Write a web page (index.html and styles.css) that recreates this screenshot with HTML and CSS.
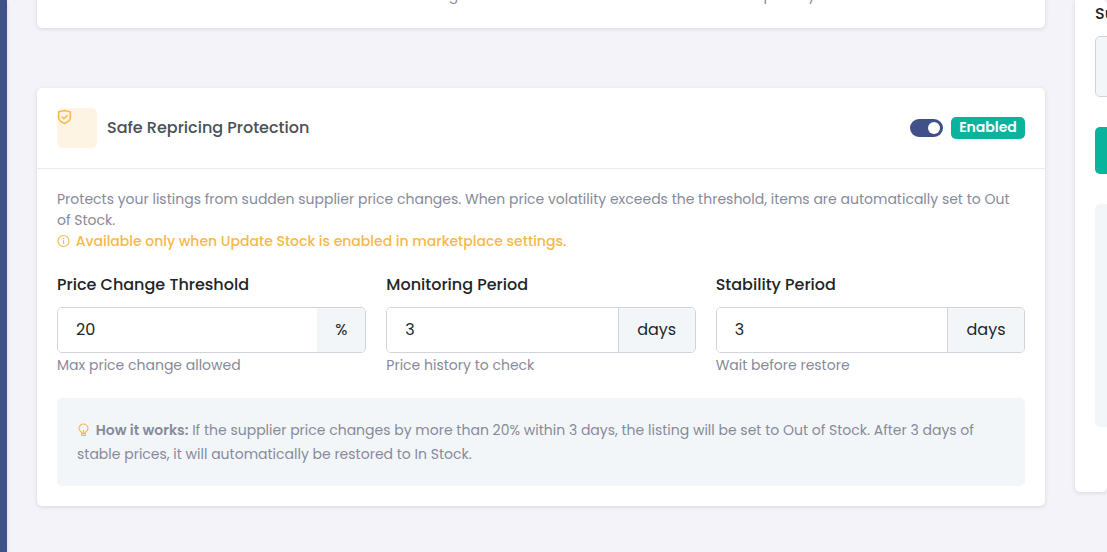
FILE: index.html
```html
<!DOCTYPE html>
<html lang="en">
<head>
<meta charset="utf-8">
<meta name="viewport" content="width=device-width, initial-scale=1">
<title>Safe Repricing Protection</title>
<link rel="stylesheet" href="styles.css">
</head>
<body>
<div class="app">
  <nav class="sidebar" aria-label="Main"></nav>
  <div class="content">
    <main class="column">
      <section class="card card-previous">
        <div class="fields">
          <div class="help">Lowest stock to list</div>
          <div class="help">Best margin allowed</div>
          <div class="help">Stock quantity</div>
        </div>
      </section>
      <section class="card">
        <header class="card-header">
          <span class="avatar">
            <svg class="shield" viewBox="0 0 15 16" fill="none" stroke="currentColor" stroke-width="1.500" aria-hidden="true">
              <path d="M7.500 1.500 1.700 2.800v6c0 1.400.7 2.500 1.800 3.300l4 2.500 4-2.500c1.100-.8 1.800-1.900 1.800-3.300v-6z"/>
              <path d="m4.700 7.500 2.200 2.200 3.700-3.700"/>
            </svg>
          </span>
          <h2 class="card-title">Safe Repricing Protection</h2>
          <input class="switch" type="checkbox" role="switch" id="protection" checked>
          <label class="badge" for="protection">Enabled</label>
        </header>
        <div class="card-body">
          <p class="description">Protects your listings from sudden supplier price changes. When price volatility exceeds the threshold, items are automatically set to Out of Stock.</p>
          <p class="notice">
            <svg class="icon" viewBox="0 0 14 14" fill="none" stroke="currentColor" stroke-width="1.200" aria-hidden="true">
              <circle cx="6.500" cy="7" r="5.500"/>
              <path d="M6.500 6.200v3.600M6.500 4v1.200"/>
            </svg>
            Available only when Update Stock is enabled in marketplace settings.
          </p>
          <div class="fields">
            <div class="field">
              <label class="label" for="threshold">Price Change Threshold</label>
              <div class="input-group">
                <input class="input" id="threshold" type="text" inputmode="numeric" value="20">
                <span class="unit unit-plain">%</span>
              </div>
              <div class="help">Max price change allowed</div>
            </div>
            <div class="field">
              <label class="label" for="monitoring">Monitoring Period</label>
              <div class="input-group">
                <input class="input" id="monitoring" type="text" inputmode="numeric" value="3">
                <span class="unit">days</span>
              </div>
              <div class="help">Price history to check</div>
            </div>
            <div class="field">
              <label class="label" for="stability">Stability Period</label>
              <div class="input-group">
                <input class="input" id="stability" type="text" inputmode="numeric" value="3">
                <span class="unit">days</span>
              </div>
              <div class="help">Wait before restore</div>
            </div>
          </div>
          <p class="info">
            <svg class="icon bulb" viewBox="0 0 14 14" fill="none" stroke="currentColor" stroke-width="1.200" aria-hidden="true">
              <path d="M4.700 12.400V9.800C4.500 8.600 2 7.800 2 5.500a4.500 4.500 0 0 1 9 0c0 2.300-2.500 3.100-2.700 4.300v2.600z"/>
              <path d="M4.700 10.300h3.600M6.500 9.800V7"/>
            </svg>
            <strong>How it works:</strong> If the supplier price changes by more than 20% within 3 days, the listing will be set to Out of Stock. After 3 days of stable prices, it will automatically be restored to In Stock.
          </p>
        </div>
      </section>
    </main>
    <aside class="panel">
      <label class="label" for="supplier">Su</label>
      <input class="panel-input" id="supplier" type="text" readonly>
      <button class="panel-button" type="button" aria-label="Save"></button>
      <div class="panel-box"></div>
    </aside>
  </div>
</div>
</body>
</html>
```
FILE: styles.css
```css
* { box-sizing: border-box; }

body {
  margin: 0;
  overflow: hidden;
  background: #f3f3f9;
  color: #212529;
  font: 14px/21px Poppins, Inter, sans-serif;
}

p, h2 { margin: 0; }

.app {
  display: grid;
  grid-template-columns: 7px minmax(0, 1fr);
  min-height: 100vh;
}

.sidebar { background: #405189; box-shadow: 0 2px 4px rgba(15, 34, 58, .12); }

.content {
  display: grid;
  grid-template-columns: minmax(0, 1fr) 32px;
  gap: 30px;
  align-items: start;
  padding-left: 30px;
  overflow: hidden;
}

.column { margin-top: -15px; }

.card, .panel {
  background: #fff;
  border-radius: 5px;
  box-shadow: 0 1px 4px rgba(56, 65, 74, .15);
}

.card-previous { padding: 0 20px 22px; margin-bottom: 60px; }

.card-header {
  display: flex;
  align-items: center;
  padding: 20px;
  border-bottom: 1px solid #e9ebec;
}

.avatar {
  width: 40px;
  height: 40px;
  margin-right: 10px;
  border-radius: 5px;
  background: #fef4e4;
  color: #f7b84b;
}

.shield { display: block; width: 15px; height: 16px; margin-top: 1px; }

.card-title {
  flex: 1;
  color: #495057;
  font-size: 16px;
  font-weight: 500;
  line-height: 20px;
}

.switch {
  appearance: none;
  display: flex;
  justify-content: flex-end;
  width: 33px;
  height: 18px;
  margin: 0 8px 0 0;
  padding: 3px;
  border-radius: 9px;
  background: #405189;
}

.switch::before {
  content: "";
  width: 12px;
  height: 12px;
  border-radius: 50%;
  background: #fff;
}

.switch:not(:checked) { justify-content: flex-start; background: #ced4da; }

.badge {
  width: 74px;
  padding-bottom: 1px;
  border-radius: 5px;
  background: #0ab39c;
  color: #fff;
  font-weight: 600;
  line-height: 21px;
  text-align: center;
}

.card-body { padding: 20px; }
.description, .help { color: #878a99; }
.notice { color: #f7b84b; font-weight: 500; }

.icon {
  width: 14px;
  height: 14px;
  margin-right: 1px;
  vertical-align: -2px;
}

.fields {
  display: grid;
  grid-template-columns: repeat(3, minmax(0, 1fr));
  gap: 20px;
}

.card-body .fields { margin: 21px 0 22px; }

.label {
  display: block;
  margin-bottom: 10px;
  font-size: 16px;
  font-weight: 500;
  line-height: 24px;
  white-space: nowrap;
}

.input-group {
  display: flex;
  height: 46px;
  margin-bottom: 2px;
  border: 1px solid #ced4da;
  border-radius: 5px;
  overflow: hidden;
  font-size: 16px;
}

.input {
  flex: 1;
  min-width: 0;
  padding: 0 18px 2px;
  border: 0;
  color: inherit;
  font: inherit;
}

.unit {
  display: flex;
  align-items: center;
  justify-content: center;
  min-width: 77px;
  padding-bottom: 2px;
  border-left: 1px solid #ced4da;
  background: #f3f6f9;
}

.unit-plain { min-width: 48px; border-left: 0; }

.info {
  padding: 20px;
  border-radius: 5px;
  background: #f3f6f9;
  color: #878a99;
  line-height: 24px;
}

.info strong { font-weight: 600; }
.bulb { color: #f7b84b; }

.panel { padding: 2px 0 65px 20px; overflow: hidden; }

.panel-input, .panel-button, .panel-box {
  display: block;
  width: 240px;
  border-radius: 5px;
}

.panel-input {
  height: 61px;
  margin-bottom: 30px;
  border: 1px solid #ced4da;
  background: #f3f6f9;
}

.panel-button {
  height: 47px;
  margin-bottom: 30px;
  border: 0;
  background: #0ab39c;
}

.panel-box { height: 223px; background: #f3f6f9; }

.panel {
  border-top-left-radius: 0;
}
```
